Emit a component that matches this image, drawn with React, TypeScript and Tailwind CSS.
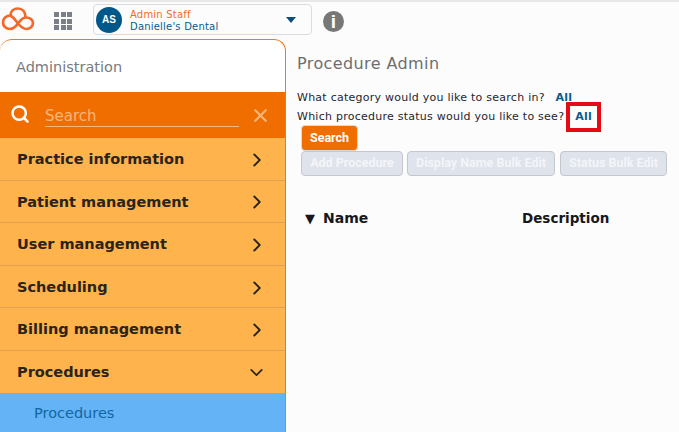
import React from 'react';
import { ChevronRight, ChevronDown, Search, X } from 'lucide-react';

const menu = ['Practice information', 'Patient management', 'User management', 'Scheduling', 'Billing management'];
const font = "font-['DejaVu_Sans',sans-serif]";

const Logo = () => (
  <svg width="36" height="30" viewBox="0 4 36 30" fill="none" stroke="#f4692a" strokeWidth="2.7">
    <path d="M10.5 15.5C6 15.5 3 18.5 3 22.5C3 26 6 29 10 29C14 29 16 26 18 23.5C20 21 22 17.5 26 17.5C30 17.5 33 20 33 23C33 26.5 30 29 26.5 29C23 29 20.5 26.5 18 23.5C16 21 14 17.5 10.5 15.5" />
    <path d="M10.5 15.5C10.5 11 14 8.5 18 8.5C22 8.5 25.5 11.5 25.5 17.5" />
  </svg>
);

const Grid = () => (
  <div className="grid grid-cols-3 gap-[1.5px] w-[18px]">
    {Array.from({ length: 9 }).map((_, i) => (
      <div key={i} className="w-[5px] h-[5px] bg-[#7b7f88]" />
    ))}
  </div>
);

export default function App() {
  return (
    <div className={`${font} w-[679px] h-[432px] overflow-hidden bg-[#fcfcfc] flex flex-col`}>
      <header className="h-[39px] shrink-0 flex items-start border-t-2 border-[#e8e8e8] pt-[2px]">
        <Logo />
        <div className="ml-[18px] mt-[8px]"><Grid /></div>
        <div className="ml-[21px] w-[219px] h-[31px] border border-[#d9dde2] rounded-[4px] flex items-center pl-[2px] pr-[15px]">
          <div className="w-[26px] h-[26px] rounded-full bg-[#00578a] text-white text-[10px] flex items-center justify-center font-['Liberation_Sans',sans-serif] font-bold">AS</div>
          <div className="ml-[8px] flex-1 text-[10px] leading-[12px] tracking-[0.2px] pt-[2px]">
            <div className="text-[#f26a2e]">Admin Staff</div>
            <div className="text-[#0b5a8c]">Danielle's Dental</div>
          </div>
          <div className="w-0 h-0 border-x-[5px] border-x-transparent border-t-[6px] border-t-[#0b4f7c]" />
        </div>
        <div className="ml-[11px] mt-[7px] w-[21px] h-[21px] rounded-full bg-[#777] text-white text-[19px] leading-none font-bold flex items-center justify-center font-['Liberation_Sans',sans-serif]">i</div>
      </header>

      <div className="flex flex-1 min-h-0">
        <aside className="w-[286px] shrink-0 border-t border-r border-[#ee7a1a] rounded-tl-[12px] rounded-tr-[12px] overflow-hidden bg-white">
          <div className="h-[52px] flex items-center pl-[16px] pt-[4px] text-[14.5px] text-[#777b80]">Administration</div>
          <div className="h-[46px] bg-[#f06e00] flex items-center pl-[10px] pr-[14px]">
            <Search size={20} strokeWidth={3} className="text-white -mt-[3px]" />
            <div className="ml-[15px] w-[194px] border-b border-[#f9b67a] text-[15px] leading-[19px] pt-[3px] text-[#f9b67a]">Search</div>
            <X size={21} strokeWidth={2.5} className="ml-auto text-[#f9b67a]" />
          </div>
          {menu.map(label => (
            <div key={label} className="h-[42.6px] bg-[#ffb34d] border-b border-[#dfa252] flex items-center justify-between pl-[17px] pr-[17px] pt-[2px] text-[14.5px] font-bold text-[#2a241a]">
              {label}
              <ChevronRight size={22} strokeWidth={2} />
            </div>
          ))}
          <div className="h-[42px] bg-[#ffb34d] flex items-center justify-between pl-[17px] pr-[18px] pt-[2px] text-[14.5px] font-bold text-[#2a241a]">
            Procedures
            <ChevronDown size={21} strokeWidth={2} />
          </div>
          <div className="h-[40px] bg-[#63b3f6] flex items-center pl-[34px] pt-[1px] text-[14.5px] text-[#11679f]">Procedures</div>
        </aside>

        <main className="flex-1 pl-[11px] pt-[15px]">
          <h1 className="text-[16px] leading-[20px] text-[#6e6e6e] tracking-[0.4px]">Procedure Admin</h1>
          <div className="mt-[14px] text-[11px] leading-[19px] text-[#26262e] tracking-[0.25px]">
            <div>What category would you like to search in? <span className="ml-[7px] font-bold text-[#0b5a8c]">All</span></div>
            <div className="flex items-center">
              Which procedure status would you like to see?
              <span className="ml-[2px] -my-[6px] border-[4px] border-[#e50a14] px-[5px] h-[30px] flex items-center font-bold text-[#0b5a8c]">All</span>
            </div>
          </div>
          <div className="pl-[4px] mt-[-1px] font-['Roboto',sans-serif] font-bold text-[12.5px] text-white">
            <button className="h-[26px] w-[57px] rounded-[4px] bg-[#f06e00] border border-[#d9d9d9]">Search</button>
            <div className="flex gap-[4px] text-[#f4f5f8]">
              <button className="h-[25px] w-[102px] rounded-[4px] bg-[#dfe3ec] border border-[#c4c7cd]">Add Procedure</button>
              <button className="h-[25px] w-[148px] rounded-[4px] bg-[#dfe3ec] border border-[#c4c7cd]">Display Name Bulk Edit</button>
              <button className="ml-[1px] h-[25px] w-[107px] rounded-[4px] bg-[#dfe3ec] border border-[#c4c7cd]">Status Bulk Edit</button>
            </div>
          </div>
          <div className="mt-[32px] flex pl-[8px] text-[14px] font-bold text-[#17171c]">
            <div className="w-[217px]"><span className="text-[13px] mr-[8px]">▼</span>Name</div>
            <div className="text-[13.5px]">Description</div>
          </div>
        </main>
      </div>
    </div>
  );
}
